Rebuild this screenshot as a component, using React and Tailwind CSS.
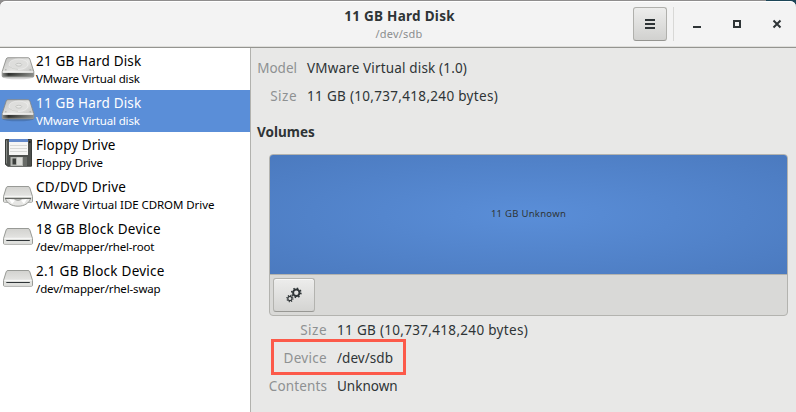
import React from "react";

function HardDisk() {
  return (
    <svg width="36" height="26" viewBox="0 0 36 26">
      <defs>
        <linearGradient id="hdTop" x1="0" y1="0" x2="1" y2="1">
          <stop offset="0" stopColor="#bdbdbb" />
          <stop offset="0.5" stopColor="#e6e6e4" />
          <stop offset="1" stopColor="#b8b8b6" />
        </linearGradient>
        <linearGradient id="hdFront" x1="0" y1="0" x2="1" y2="0">
          <stop offset="0" stopColor="#8b8d8a" />
          <stop offset="0.2" stopColor="#2f312f" />
          <stop offset="0.6" stopColor="#5c5e5b" />
          <stop offset="1" stopColor="#8b8d8a" />
        </linearGradient>
      </defs>
      <ellipse cx="18" cy="22.3" rx="15.5" ry="2" fill="#000" opacity="0.16" />
      <path d="M8 2.7H28Q29.3 2.7 29.8 4L33.8 16.5V21Q33.8 21.8 33 21.8H3Q2.2 21.8 2.2 21V16.5L6.2 4Q6.7 2.7 8 2.7Z" fill="url(#hdTop)" stroke="#858783" strokeWidth="0.8" />
      <path d="M2.3 17.8H33.7V21Q33.7 21.9 33 21.9H3Q2.3 21.9 2.3 21Z" fill="url(#hdFront)" />
      <path d="M2.8 17H33.2" stroke="#fafaf9" strokeWidth="1.2" />
      <path d="M3 21.3H33" stroke="#9a9c99" strokeWidth="0.8" />
      <ellipse cx="18.5" cy="9.2" rx="9.5" ry="5.2" fill="#dededc" stroke="#f4f4f4" strokeWidth="0.5" />
      <path d="M9.5 11.5Q12 14.3 18 14.4" fill="none" stroke="#c4c5c2" strokeWidth="0.7" />
      <ellipse cx="18.8" cy="9.7" rx="3" ry="1.4" fill="#e9e9e7" stroke="#b2b3b0" strokeWidth="0.6" />
      <path d="M5 14.8h1.5M29.5 14.8h1.5" stroke="#9c9e9a" strokeWidth="0.8" />
    </svg>
  );
}

function BlockDrive({ disc }) {
  return (
    <svg width="36" height="28" viewBox="0 0 36 28">
      <defs>
        <linearGradient id="drvTop" x1="0" y1="0" x2="0" y2="1">
          <stop offset="0" stopColor="#d2d2cf" />
          <stop offset="1" stopColor="#efefed" />
        </linearGradient>
      </defs>
      <path d="M8 3.5H28Q29.3 3.5 29.8 4.8L32.5 13.5V18.2Q32.5 19.2 31.5 19.2H4.5Q3.5 19.2 3.5 18.2V13.5L6.2 4.8Q6.7 3.5 8 3.5Z" fill="url(#drvTop)" stroke="#8f918c" strokeWidth="0.9" />
      <path d="M4.2 13.6H31.8V18.5H4.2Z" fill="#e0e1de" />
      <path d="M4.5 13.3H31.5" stroke="#fbfbfa" strokeWidth="1" />
      {disc ? (
        <g>
          <path d="M5.3 15.4H30.7C29 20.5 24 23.2 18 23.2S7 20.5 5.3 15.4Z" fill="#e6e6e4" stroke="#8f918d" strokeWidth="0.9" />
          <path d="M9 16L15 17.5 12 21ZM27 16L21 17.5 24 21Z" fill="#fff" />
          <path d="M14 15.6Q18 19.5 22 15.6Z" fill="#bcbdba" stroke="#8f918d" strokeWidth="0.6" />
          <path d="M5 15.4H31" stroke="#5e615d" strokeWidth="1" />
        </g>
      ) : (
        <path d="M6.3 15.5H29.8" stroke="#303538" strokeWidth="1" />
      )}
    </svg>
  );
}

function Floppy() {
  return (
    <svg width="36" height="30" viewBox="0 0 36 30">
      <path d="M5.5 1.5H31.5V28.2H7.5L5.5 26.2Z" fill="#4d504d" stroke="#3a3d3b" strokeWidth="1" />
      <path d="M6.5 2.5V25.5" stroke="#858884" strokeWidth="1" />
      <path d="M9 1H28V17H9Z" fill="#f5f5f4" />
      <path d="M9 1H28V4H9Z" fill="#6289cb" />
      <path d="M10 7.5H27M10 10.5H27M10 13.5H27" stroke="#cfd0ce" strokeWidth="0.8" />
      <path d="M10.5 19H27V28H10.5Z" fill="#b4b6b2" />
      <path d="M12.5 20.5H16V26.5H12.5Z" fill="#3b3e3c" />
      <path d="M17 19.5H22V27H17Z" fill="#d9dad6" />
      <path d="M23 19H27V28H23Z" fill="#686b67" />
      <path d="M29 3h1.5v2H29Z" fill="#1e201f" />
    </svg>
  );
}

function Gears() {
  return (
    <svg width="16" height="16" viewBox="0 0 16 16" fill="none" stroke="#2e3436">
      <circle cx="10.3" cy="5.8" r="3.2" strokeWidth="2" />
      <circle cx="10.3" cy="5.8" r="4.6" strokeWidth="1.6" strokeDasharray="1.5 2.11" />
      <circle cx="3.9" cy="11.5" r="2.1" strokeWidth="1.2" />
      <circle cx="3.9" cy="11.5" r="3.1" strokeWidth="1.1" strokeDasharray="1.1 1.33" />
    </svg>
  );
}

const devices = [
  { title: "21 GB Hard Disk", sub: "VMware Virtual disk", icon: <HardDisk />, pad: "pt-[7px]", tt: "tracking-[0.17px]", st: "tracking-[-0.16px]" },
  { title: "11 GB Hard Disk", sub: "VMware Virtual disk", icon: <HardDisk />, pad: "pt-[7px]", tt: "tracking-[0.17px]", st: "tracking-[-0.16px]", selected: true },
  { title: "Floppy Drive", sub: "Floppy Drive", icon: <Floppy />, pad: "pt-[6px]", tt: "tracking-[0.06px]", st: "tracking-[0px]" },
  { title: "CD/DVD Drive", sub: "VMware Virtual IDE CDROM Drive", icon: <BlockDrive disc />, pad: "pt-[9px]", tt: "tracking-[0.17px]", st: "tracking-[-0.07px]" },
  { title: "18 GB Block Device", sub: "/dev/mapper/rhel-root", icon: <BlockDrive />, pad: "pt-[9px]", tt: "tracking-[0.25px]", st: "tracking-[-0.19px]" },
  { title: "2.1 GB Block Device", sub: "/dev/mapper/rhel-swap", icon: <BlockDrive />, pad: "pt-[9px]", tt: "tracking-[0.25px]", st: "tracking-[-0.15px]" },
];

function Row({ label, value, labelWidth, lt = "", vt = "" }) {
  return (
    <div className="flex h-7 items-center leading-[28px]">
      <span className={`${labelWidth} shrink-0 text-right text-[#8e9192]`}>
        <span className={lt}>{label}</span>
      </span>
      <span className={`ml-[10px] ${vt}`}>{value}</span>
    </div>
  );
}

export default function App() {
  return (
    <div className="flex h-[412px] w-[796px] flex-col overflow-hidden bg-[#e8e8e7] font-['Noto_Sans',sans-serif] text-[13.5px] whitespace-nowrap text-[#2e3436]">
      <div className="h-[48px] shrink-0 bg-[linear-gradient(90deg,#8f8d8d_0,#8f8d8d_766px,#1d4658_766px)] pt-px">
        <header className="flex h-[47px] rounded-t-[6px] border-b border-[#949490] bg-[#f3f3f3] shadow-[inset_0_1px_0_#fff,inset_0_-1px_0_#dededb]">
          <div className="w-[163px]" />
          <div className="flex flex-1 flex-col items-center pt-[6px]">
            <h1 className="pl-[3px] text-[13.5px] leading-[18px] font-bold tracking-[0.28px]">11 GB Hard Disk</h1>
            <p className="pl-[2px] text-[11px] leading-[18px] tracking-[0.2px] text-[#8b8e8f]">/dev/sdb</p>
          </div>
          <div className="flex w-[163px] pt-[6px]">
            <button className="flex h-[34px] w-[34px] flex-col items-center justify-center gap-[2px] rounded-[3px] border border-[#b0b0ac] border-b-[#959591] bg-linear-to-b from-[#ededec] to-[#d1d1cf]">
              <span className="h-[2px] w-[10px] bg-[#2e3436]" />
              <span className="h-[2px] w-[10px] bg-[#2e3436]" />
              <span className="h-[2px] w-[10px] bg-[#2e3436]" />
            </button>
            <div className="ml-[6px] h-[34px] w-px bg-[#d8d8d6]" />
            <svg className="mt-[9px] ml-[19px]" width="90" height="16" viewBox="0 0 90 16" fill="none" stroke="#2e3436" strokeWidth="2">
              <path d="M0 11H8" />
              <path d="M41 5H47V11H41Z" />
              <path d="M80.5 4.5L87.5 11.5M87.5 4.5L80.5 11.5" />
            </svg>
          </div>
        </header>
      </div>

      <div className="flex min-h-0 flex-1">
        <aside className="w-[251px] shrink-0 border-r border-[#b2b2ae] bg-white text-black">
          {devices.map((d) => (
            <div key={d.title} className={`flex h-[42px] ${d.selected ? "bg-[#5a8ed8] text-white" : ""}`}>
              <div className={`w-9 shrink-0 ${d.pad}`}>{d.icon}</div>
              <div className="pt-[4px]">
                <div className="text-[13.5px] leading-[19px]"><span className={d.tt}>{d.title}</span></div>
                <div className="text-[11.5px] leading-[16px]"><span className={d.st}>{d.sub}</span></div>
              </div>
            </div>
          ))}
        </aside>

        <main className="flex-1 pt-[6px]">
          <Row label="Model" value="VMware Virtual disk (1.0)" labelWidth="w-[46px]" vt="tracking-[0.16px]" />
          <Row label="Size" value="11 GB (10,737,418,240 bytes)" labelWidth="w-[46px]" lt="tracking-[0.5px]" vt="tracking-[0.31px]" />
          <h2 className="mt-[12px] ml-[6px] leading-[20px] font-bold"><span>Volumes</span></h2>
          <section className="mt-[12px] ml-[18px] flex h-[162px] w-[519px] flex-col overflow-hidden rounded-[4px] border border-[#b3b3af] bg-[#d9d9d7]">
            <div className="flex h-[119px] items-center justify-center bg-[radial-gradient(ellipse_at_center,#5a8ed8_0%,#4b7abf_100%)] pb-px text-[9.5px] tracking-[0.28px]"><span>11 GB Unknown</span></div>
            <div className="border-t border-[#b3b3af] pt-[3px] pl-[3px]">
              <button className="flex h-[34px] w-[42px] items-center justify-center rounded-[3px] border border-[#b3b3af] border-b-[#989894] bg-linear-to-b from-[#ededec] to-[#d4d4d2] shadow-[inset_0_1px_0_#f8f8f8]">
                <Gears />
              </button>
            </div>
          </section>
          <Row label="Size" value="11 GB (10,737,418,240 bytes)" labelWidth="w-[76px]" lt="tracking-[0.5px]" vt="tracking-[0.31px]" />
          <div className="relative">
            <Row label="Device" value="/dev/sdb" labelWidth="w-[76px]" lt="tracking-[0.3px]" vt="tracking-[0.05px]" />
            <div className="absolute top-[-5px] left-[20px] h-[36px] w-[135px] border-[3px] border-[#fc5a4a]" />
          </div>
          <Row label="Contents" value="Unknown" labelWidth="w-[76px]" lt="tracking-[0.12px]" />
        </main>
      </div>
    </div>
  );
}
